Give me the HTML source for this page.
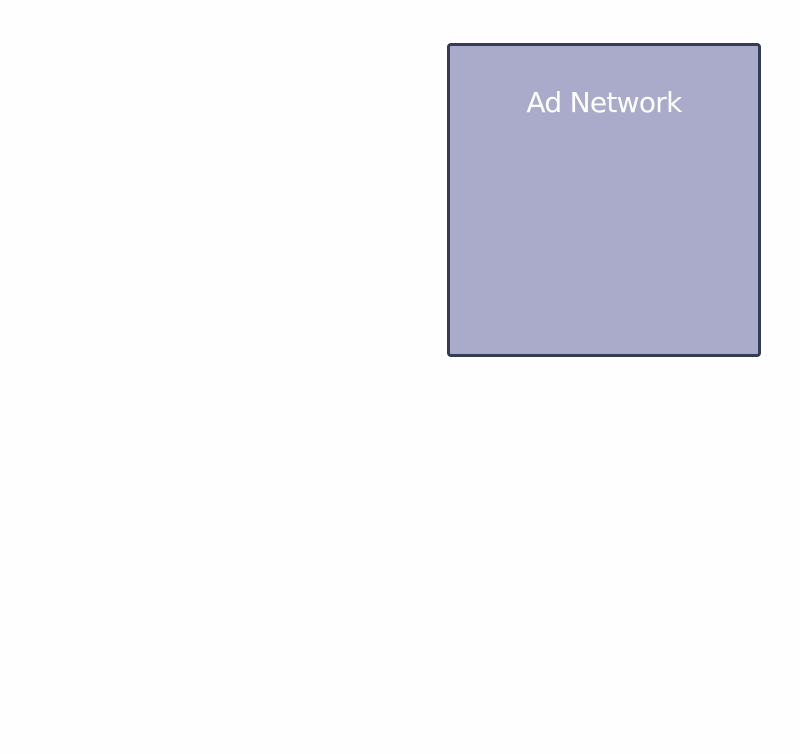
<!DOCTYPE html>
<html><head><style>
html,body{margin:0;padding:0;background:#fefefe;width:800px;height:754px;overflow:hidden}
.box{position:absolute;left:447px;top:43px;width:308px;height:308px;background:#aaaacb;border:3px solid #343c54;border-radius:4px}
.t{position:absolute;left:0;right:0;top:41px;text-align:center;color:#fff;font-family:"DejaVu Sans","Liberation Sans",sans-serif;font-size:28px;letter-spacing:-0.7px;line-height:32px}
</style></head><body>
<div class="box"><div class="t">Ad Network</div></div>
</body></html>
